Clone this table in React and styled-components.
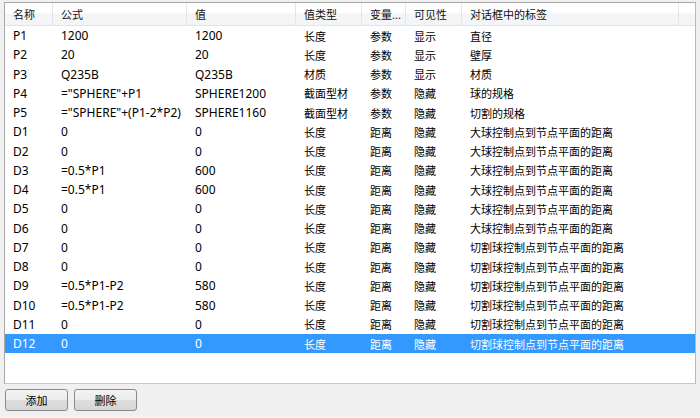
import React from "react";
import styled, { createGlobalStyle } from "styled-components";

const GlobalStyle = createGlobalStyle`
  html, body {
    margin: 0;
    padding: 0;
    background: #f0f0f0;
  }
  body {
    font-family: "Noto Sans", "Noto Sans CJK SC", sans-serif;
    font-size: 12px;
  }
`;

const COLS = "48px 134px 109px 66px 44px 56px 217px 1fr";

const isCjk = (s) => /[\u4e00-\u9fff]/.test(s || "");

const Window = styled.div`
  width: 700px;
  height: 418px;
  box-sizing: border-box;
  padding: 2px 4px 0 4px;
  display: flex;
  flex-direction: column;
  background: #f0f0f0;
  border-bottom: 1px solid #f7f7f7;
`;

const Panel = styled.div`
  height: 382px;
  box-sizing: border-box;
  background: #fff;
  border: 1px solid #a8a8a8;
  border-right-color: #b8b8b8;
  border-bottom-color: #c8c8c8;
  overflow: hidden;
`;

const HeaderRow = styled.div`
  display: grid;
  grid-template-columns: ${COLS};
  height: 22px;
  background: linear-gradient(#ffffff 0%, #ffffff 45%, #f4f5f7 50%, #f4f5f7 100%);
  border-bottom: 1px solid #e3e4e6;
`;

const HeaderCell = styled.div`
  display: flex;
  align-items: center;
  padding-left: 8px;
  color: #111;
  font-size: ${(p) => (p.cjk ? "11px" : "12px")};
  border-right: 1px solid ${(p) => (p.last ? "transparent" : "#e4e5e7")};
  white-space: nowrap;
  overflow: hidden;
`;

const Row = styled.div`
  display: grid;
  grid-template-columns: ${COLS};
  height: 19.25px;
  background: ${(p) => (p.selected ? "#3399ff" : "transparent")};
  color: ${(p) => (p.selected ? "#ffffff" : "#000000")};
`;

const Cell = styled.div`
  display: flex;
  align-items: center;
  padding-left: 8px;
  font-size: ${(p) => (p.cjk ? "11px" : "12px")};
  white-space: nowrap;
  overflow: hidden;
`;

const ButtonBar = styled.div`
  display: flex;
  gap: 6px;
  padding: 5px 0 0 1px;
`;

const Button = styled.button`
  width: 63px;
  height: 22px;
  border: 1px solid #8a8a8a;
  border-radius: 3px;
  background: linear-gradient(#f3f3f3 0%, #ececec 48%, #dddddd 52%, #d6d6d6 100%);
  font-family: inherit;
  font-size: 11px;
  color: #000;
  padding: 0;
`;

const headers = ["名称", "公式", "值", "值类型", "变量...", "可见性", "对话框中的标签"];

const rows = [
  ["P1", "1200", "1200", "长度", "参数", "显示", "直径"],
  ["P2", "20", "20", "长度", "参数", "显示", "壁厚"],
  ["P3", "Q235B", "Q235B", "材质", "参数", "显示", "材质"],
  ["P4", '="SPHERE"+P1', "SPHERE1200", "截面型材", "参数", "隐藏", "球的规格"],
  ["P5", '="SPHERE"+(P1-2*P2)', "SPHERE1160", "截面型材", "参数", "隐藏", "切割的规格"],
  ["D1", "0", "0", "长度", "距离", "隐藏", "大球控制点到节点平面的距离"],
  ["D2", "0", "0", "长度", "距离", "隐藏", "大球控制点到节点平面的距离"],
  ["D3", "=0.5*P1", "600", "长度", "距离", "隐藏", "大球控制点到节点平面的距离"],
  ["D4", "=0.5*P1", "600", "长度", "距离", "隐藏", "大球控制点到节点平面的距离"],
  ["D5", "0", "0", "长度", "距离", "隐藏", "大球控制点到节点平面的距离"],
  ["D6", "0", "0", "长度", "距离", "隐藏", "大球控制点到节点平面的距离"],
  ["D7", "0", "0", "长度", "距离", "隐藏", "切割球控制点到节点平面的距离"],
  ["D8", "0", "0", "长度", "距离", "隐藏", "切割球控制点到节点平面的距离"],
  ["D9", "=0.5*P1-P2", "580", "长度", "距离", "隐藏", "切割球控制点到节点平面的距离"],
  ["D10", "=0.5*P1-P2", "580", "长度", "距离", "隐藏", "切割球控制点到节点平面的距离"],
  ["D11", "0", "0", "长度", "距离", "隐藏", "切割球控制点到节点平面的距离"],
  ["D12", "0", "0", "长度", "距离", "隐藏", "切割球控制点到节点平面的距离"],
];

const App = () => {
  return (
    <>
      <GlobalStyle />
      <Window>
        <Panel>
          <HeaderRow>
            {headers.map((h) => (
              <HeaderCell key={h} cjk={isCjk(h)}>
                {h}
              </HeaderCell>
            ))}
            <HeaderCell last />
          </HeaderRow>
          {rows.map((r, idx) => (
            <Row key={r[0]} selected={idx === rows.length - 1}>
              {r.map((c, i) => (
                <Cell key={i} cjk={isCjk(c)}>
                  {c}
                </Cell>
              ))}
              <Cell />
            </Row>
          ))}
        </Panel>
        <ButtonBar>
          <Button>添加</Button>
          <Button>删除</Button>
        </ButtonBar>
      </Window>
    </>
  );
};

export default App;
